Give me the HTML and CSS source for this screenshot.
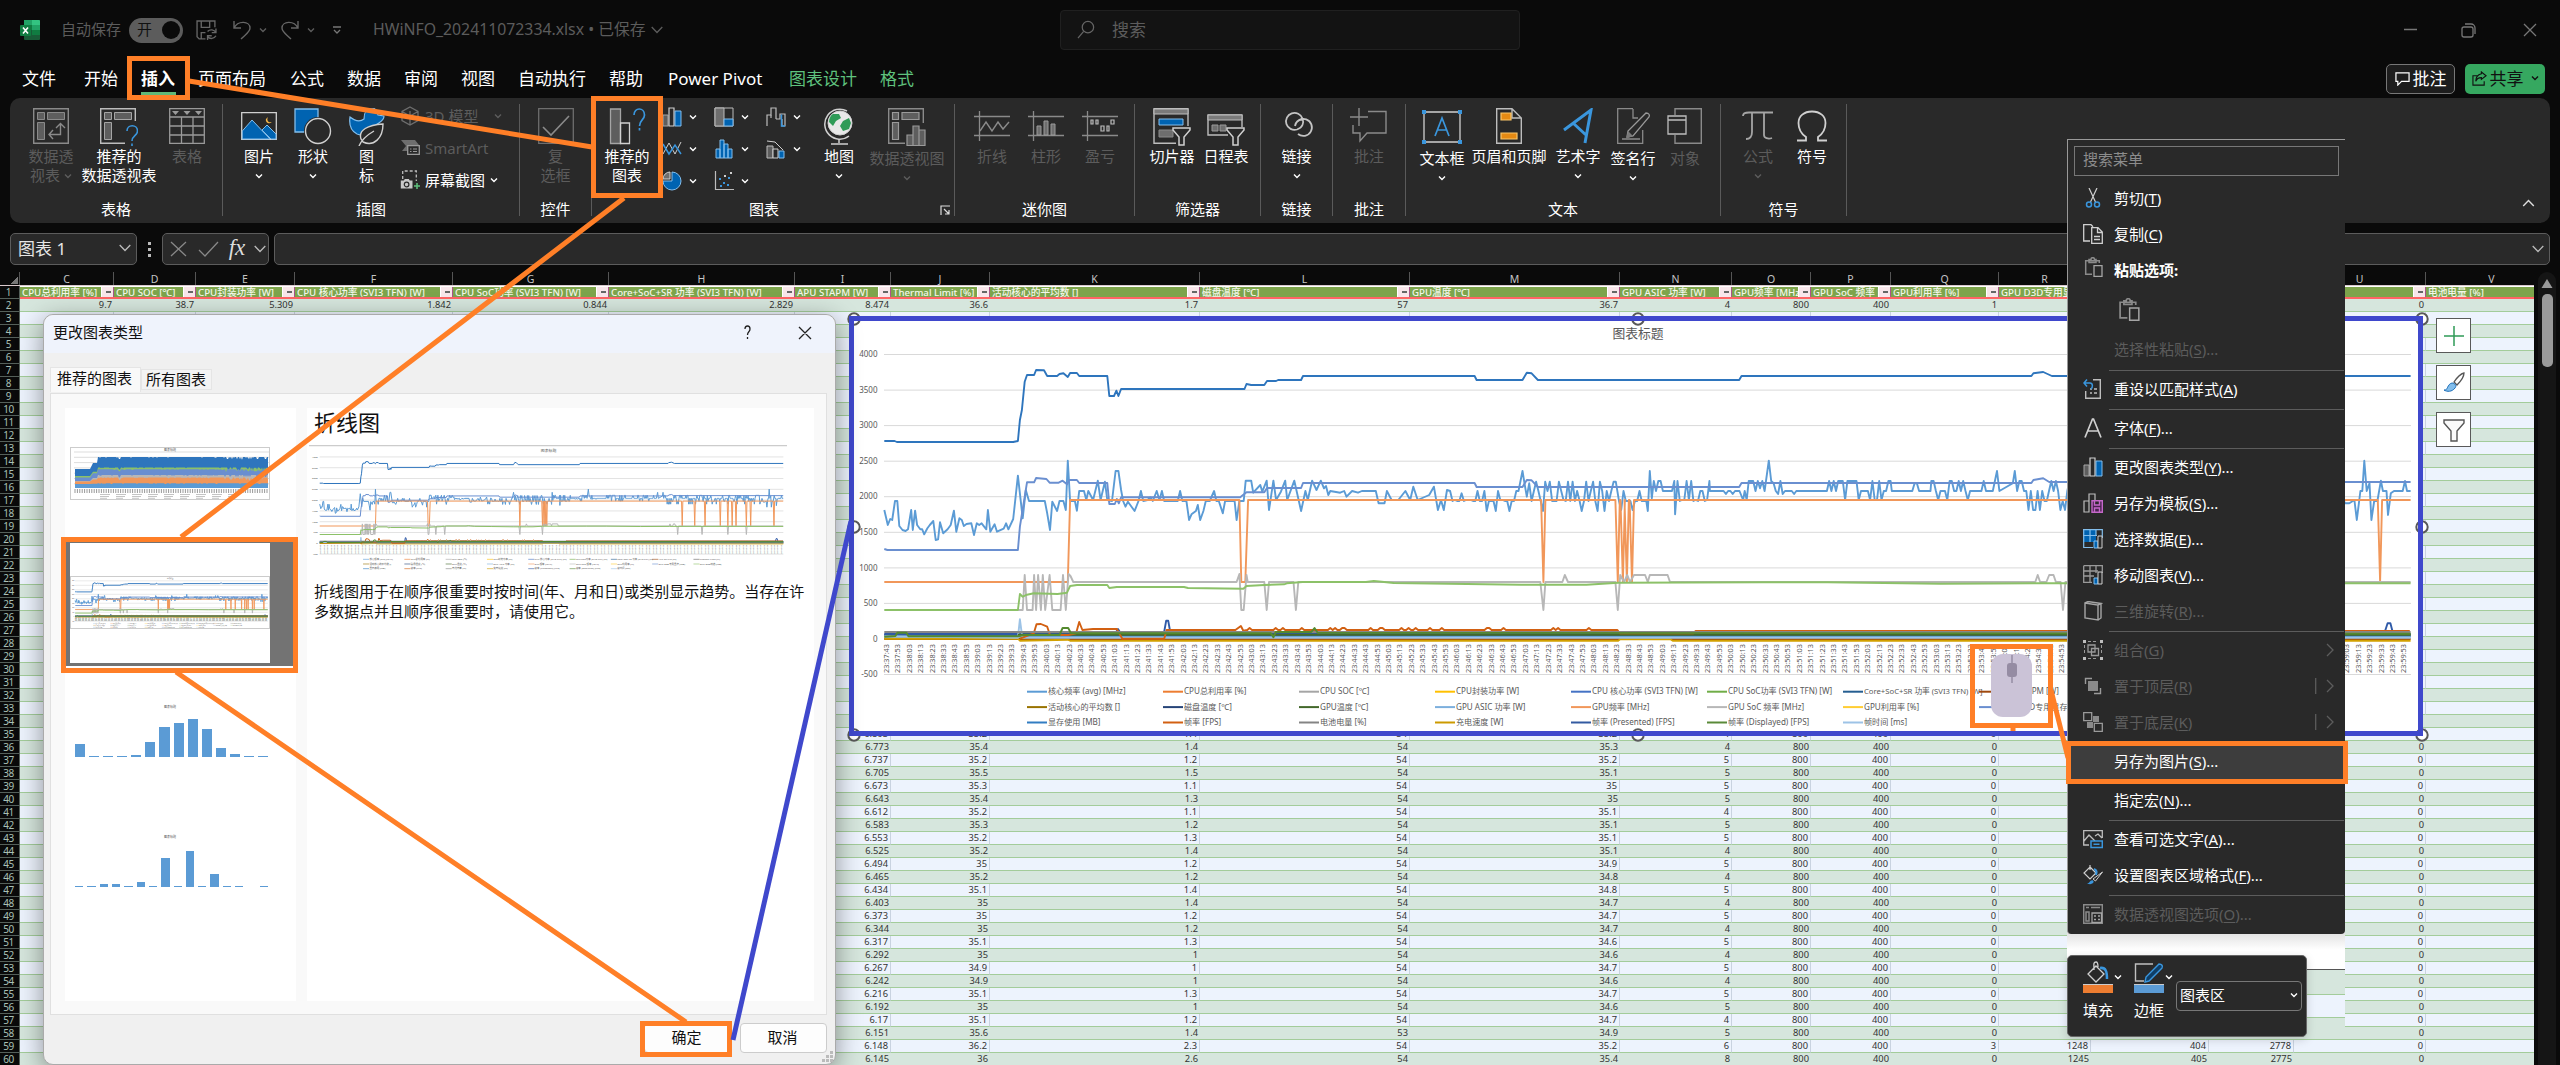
FILE: index.html
```html
<!DOCTYPE html>
<html lang="zh-CN">
<head>
<meta charset="utf-8">
<title>HWiNFO_202411072334.xlsx</title>
<link rel="stylesheet" href="styles.css">
</head>
<body>
<svg class="defs" aria-hidden="true">
  <symbol id="chev" viewBox="0 0 8 8"><path d="M1 2.5 4 5.5 7 2.5" fill="none" stroke="currentColor" stroke-width="1.4"/></symbol>
  <symbol id="chev-lg" viewBox="0 0 12 8"><path d="M.7 1 6 6.5 11.300 1" fill="none" stroke="currentColor" stroke-width="1.3"/></symbol>
  <symbol id="pivot" viewBox="0 0 36 36"><path d="M.7.7h34.600v34.600H.7z" fill="none" stroke="#8a8a8a" stroke-width="1.400"/><path d="M4.500 4.500h7v7h-7zM14.500 4.500h17v7h-17zM4.500 14.500h7v17h-7z" fill="#5e5e5e" stroke="#8a8a8a"/><path d="M20 22l-4 4.500 4 4.500M16 26.500h11.500V16M23 20l4.500-4.500L32 20" fill="none" stroke="#8a8a8a" stroke-width="1.400"/></symbol>
  <symbol id="pivot-q" viewBox="0 0 38 38"><path d="M25 35.300H.7V.7h34.600V13" fill="none" stroke="#bdbdbd" stroke-width="1.400"/><path d="M4.500 4.500h7v7h-7zM14.500 4.500h17v7h-17zM4.500 14.500h7v17h-7z" fill="#5e5e5e" stroke="#a5a5a5"/><path d="M27 23c0-7 10.500-7 10.500 0 0 5-5.500 4.500-5.500 10M32 35.500V38" fill="none" stroke="#3a96dd" stroke-width="1.600"/></symbol>
  <symbol id="table" viewBox="0 0 36 36"><path d="M.7.7h34.600v34.600H.7zM.7 9h34.600M.7 18h34.600M.7 27h34.600M12.500 9v26.500M24 9v26.500" fill="none" stroke="#9a9a9a" stroke-width="1.300"/><path d="M3 3h7L6.500 7zM14.500 3h7L18 7zM26 3h7l-3.500 4z" fill="#9a9a9a"/></symbol>
  <symbol id="picture" viewBox="0 0 36 36"><path d="M.7 4.700h34.600v26.600H.7z" fill="none" stroke="#d0d0d0" stroke-width="1.300"/><path d="M1.300 23 11 12l18 19H1.300zM21 22l5-5 9 9v5h-5z" fill="#0063b1" stroke="#83beec"/><path d="M27 9c-2 4 1 6 4 5-3 3-7 0-6-3z" fill="#f7b94a"/></symbol>
  <symbol id="shapes" viewBox="0 0 38 38"><path d="M1 1h23v23H1z" fill="#0063b1" stroke="#83beec" stroke-width="1.300"/><circle cx="24" cy="23" r="14" fill="#292929"/><circle cx="24" cy="23" r="12.500" fill="#292929" stroke="#d0d0d0" stroke-width="1.400"/></symbol>
  <symbol id="icons" viewBox="0 0 36 38"><path d="M1 9c5 4 10 5 14 2 0-14 13-14 14-4l6 1c0 6-6 6-9 10-5 9-13 10-18 8C2 23 0 16 1 9z" fill="#0063b1" stroke="#83beec" stroke-width="1.200"/><path d="M10 38c3-7 8-11 15-15M12 31C9 22 19 17 34 16c0 14-9 23-20 18z" fill="#292929" stroke="#d0d0d0" stroke-width="1.400"/></symbol>
  <symbol id="cube" viewBox="0 0 20 20"><path d="M10 1l8 4.500v9L10 19l-8-4.500v-9zM2 5.500l8 4.500 8-4.500M10 10v9M10 5v5" fill="none" stroke="#6e6e6e" stroke-width="1.300"/></symbol>
  <symbol id="smartart" viewBox="0 0 20 20"><path d="M1 2h14l4 5H7v6H2l4-5z" fill="#6e6e6e"/><path d="M7.700 7.700h11.600v8.600H7.700z" fill="#292929" stroke="#9a9a9a" stroke-width="1.300"/><path d="M10 11h1.500M13 11h4M10 13.500h1.500M13 13.500h4" stroke="#9a9a9a"/></symbol>
  <symbol id="shot" viewBox="0 0 20 20"><path d="M2.700 9V1h13.600v10" fill="none" stroke="#bdbdbd" stroke-dasharray="3 2" stroke-width="1.300"/><path d="M.8 10.500h3l1-1.500h4l1 1.500h2.700v8H.8z" fill="#c8c8c8"/><circle cx="6.600" cy="14.500" r="2.300" fill="#c8c8c8" stroke="#292929" stroke-width="1.200"/><path d="M17 13v6M14 16h6" stroke="#5fc27e" stroke-width="1.500"/></symbol>
  <symbol id="check" viewBox="0 0 36 36"><path d="M.7.7h34.600v34.600H.7z" fill="none" stroke="#6e6e6e" stroke-width="1.300"/><path d="M5 19l8 8L31 8" fill="none" stroke="#8a8a8a" stroke-width="1.600"/></symbol>
  <symbol id="rec-chart" viewBox="0 0 38 38"><path d="M2.500 1h10v34.500h-10z" fill="#5e5e5e" stroke="#a5a5a5" stroke-width="1.300"/><path d="M12.500 15h9v20.500h-9z" fill="none" stroke="#d0d0d0" stroke-width="1.300"/><path d="M26 7c0-8 10.500-8 10.500 0 0 5-5 5-5 11M31.500 20v2.500" fill="none" stroke="#3a96dd" stroke-width="1.700"/></symbol>
  <symbol id="c-col" viewBox="0 0 20 20"><path d="M1 8h5v11H1z" fill="#5e5e5e" stroke="#a5a5a5"/><path d="M7 1h5v18H7z" fill="none" stroke="#d0d0d0" stroke-width="1.200"/><path d="M13 4h6v15h-6z" fill="#0063b1" stroke="#83beec"/></symbol>
  <symbol id="c-tree" viewBox="0 0 20 20"><path d="M1 1h18v18H1z" fill="none" stroke="#bdbdbd"/><path d="M1 1h9v18H1z" fill="#6e6e6e" stroke="#bdbdbd"/><path d="M10 12h9v7h-9z" fill="#0063b1" stroke="#83beec"/></symbol>
  <symbol id="c-fall" viewBox="0 0 20 20"><path d="M1 19V8h4V1h5v11" fill="none" stroke="#bdbdbd" stroke-width="1.200"/><path d="M5 8v3M10 12h4V7h5v12h-3v-7" fill="none" stroke="#bdbdbd" stroke-width="1.200"/><path d="M15.500 7.500v11.500h3.500" fill="none" stroke="#3a96dd" stroke-width="1.500"/></symbol>
  <symbol id="c-line" viewBox="0 0 20 20"><path d="M1 15 7 4l6 11 6-12" fill="none" stroke="#d0d0d0"/><path d="M1 5l6 10 6-9 6 9" fill="none" stroke="#3a96dd" stroke-width="1.500"/></symbol>
  <symbol id="c-hist" viewBox="0 0 20 20"><path d="M2 10h4v9H2zM6 1h4v18H6zM10 5h4v14h-4zM14 10h4v9h-4z" fill="#0063b1" stroke="#83beec"/></symbol>
  <symbol id="c-combo" viewBox="0 0 20 20"><path d="M1 7h6v12H1z" fill="#5e5e5e" stroke="#bdbdbd"/><path d="M7 10h5v9H7z" fill="#292929" stroke="#d0d0d0"/><path d="M13 12h5v7h-5z" fill="#0063b1" stroke="#83beec"/><path d="M1 2l8 1 8 8" fill="none" stroke="#d0d0d0"/></symbol>
  <symbol id="c-pie" viewBox="0 0 20 20"><path d="M10 1a9 9 0 11-9 9h9z" fill="#0063b1" stroke="#83beec"/><path d="M8 8H1a7 7 0 017-7z" fill="#6e6e6e" stroke="#d0d0d0"/></symbol>
  <symbol id="c-dot" viewBox="0 0 20 20"><path d="M1.500 0v18.500H20" fill="none" stroke="#bdbdbd" stroke-width="1.200"/><path d="M5 7h2v2H5zM9 11h2v2H9zM14 6h2v2h-2zM13 13h2v2h-2zM6 14h2v2H6z" fill="#3a96dd"/><path d="M10 4h2v2h-2zM16 1h2v2h-2z" fill="#d0d0d0"/></symbol>
  <symbol id="globe" viewBox="0 0 36 38"><path d="M26 3A15 15 0 1 0 28 28" fill="none" stroke="#d0d0d0" stroke-width="1.500"/><circle cx="19" cy="15" r="12" fill="#e8e8e8" stroke="#d0d0d0"/><path d="M12 6l6 0 2 4-5 3-3 5-4-4c0-4 2-7 4-8zM22 13l6-3 2 5-2 6-6 2-3-5z" fill="#2f9b57"/><path d="M18 31v4M10 36h17" stroke="#d0d0d0" stroke-width="1.500"/></symbol>
  <symbol id="pivot-chart" viewBox="0 0 38 38"><path d="M17 35.300H.7V.7h34.600V15" fill="none" stroke="#8a8a8a" stroke-width="1.400"/><path d="M4.500 4.500h6v7h-6zM14 4.500h17v7H14zM4.500 14.500h6v17h-6zM19 27h6v10.500h-6zM25 18h6v19.500h-6zM31 22h6v15.500h-6z" fill="#5e5e5e" stroke="#9a9a9a" stroke-width="1.200"/></symbol>
  <symbol id="sp-line" viewBox="0 0 36 36"><path d="M0 8.500h36M0 27.500h36M5.500 3v30" stroke="#8a8a8a" stroke-width="1.300"/><path d="M6 23l6-9 6 9 6-9 5 7 6-7" fill="none" stroke="#8a8a8a" stroke-width="1.400"/></symbol>
  <symbol id="sp-col" viewBox="0 0 36 36"><path d="M0 8.500h36M0 27.500h36M5.500 3v30" stroke="#8a8a8a" stroke-width="1.300"/><path d="M9 18h4v9H9zM16 13h4v14h-4zM23 16h4v11h-4z" fill="#6e6e6e" stroke="#9a9a9a"/></symbol>
  <symbol id="sp-win" viewBox="0 0 36 36"><path d="M0 8.500h36M0 27.500h36M5.500 3v30" stroke="#8a8a8a" stroke-width="1.300"/><path d="M9 12h2v4H9zM14 12h2v4h-2zM19 18h3v5h-3zM25 18h2v5h-2zM29 12h3v4h-3z" fill="none" stroke="#bdbdbd" stroke-width="1.200"/></symbol>
  <symbol id="slicer" viewBox="0 0 40 38"><path d="M24 35.300H2V.7h34V18" fill="none" stroke="#bdbdbd" stroke-width="1.400"/><path d="M2 1h34v5H2z" fill="#7a7a7a" stroke="#bdbdbd"/><path d="M7 11h24v6H7z" fill="#0063b1" stroke="#83beec"/><path d="M7 22h14v7H7z" fill="#6e6e6e" stroke="#8a8a8a"/><path d="M21 20h17v2l-6 7v8h-5v-8l-6-7z" fill="#292929" stroke="#d0d0d0" stroke-width="1.500"/></symbol>
  <symbol id="timeline" viewBox="0 0 40 38"><path d="M22 27H2V7h34v12" fill="none" stroke="#bdbdbd" stroke-width="1.400"/><path d="M2 7h34v5H2z" fill="#7a7a7a" stroke="#bdbdbd"/><path d="M6 17h6v6H6zM14 17h6v6h-6z" fill="#6e6e6e" stroke="#9a9a9a"/><path d="M21 20h17v2l-6 7v8h-5v-8l-6-7z" fill="#292929" stroke="#d0d0d0" stroke-width="1.500"/></symbol>
  <symbol id="link" viewBox="0 0 36 36"><path d="M18 21.500a8.500 8.500 0 1 1 5.500-11M16 18a8.500 8.500 0 1 1 3 8M23.500 10.500c1.500 4 .5 9-5.500 11M16 18c.5-3 3-6 7-6.500" fill="none" stroke="#c4c4c4" stroke-width="1.800"/></symbol>
  <symbol id="comment" viewBox="0 0 38 38"><path d="M18 3.500h18V25H17l-7 8v-8H3V17M9 0v18M0 9h18" fill="none" stroke="#8a8a8a" stroke-width="1.400"/></symbol>
  <symbol id="textbox" viewBox="0 0 40 38"><path d="M2 4h36v30H2z" fill="none" stroke="#d0d0d0" stroke-width="1.300"/><path d="M0 2h4v4H0zM36 2h4v4h-4zM0 32h4v4H0zM36 32h4v4h-4z" fill="#3a96dd"/><path d="M13 28l7-18 7 18M15.500 22h9" fill="none" stroke="#3a96dd" stroke-width="1.700"/></symbol>
  <symbol id="hf" viewBox="0 0 36 36"><path d="M5.700.7H21l9.300 9.300v25.300H5.700zM21 1v9h9" fill="none" stroke="#bdbdbd" stroke-width="1.400"/><path d="M10 5h10v7H10zM10 25h16v6H10z" fill="#e58a13" stroke="#f9c66b" stroke-width="1.200"/></symbol>
  <symbol id="wordart" viewBox="0 0 36 36"><path d="M4 22 31 2l-6 33M13 15l13 12" fill="none" stroke="#3a96dd" stroke-width="3"/></symbol>
  <symbol id="sign" viewBox="0 0 36 36"><path d="M18 .700H2.700v34.600h25V22M18 1v9h5M7 31h18" fill="none" stroke="#8a8a8a" stroke-width="1.300"/><path d="M31 5c3 0 4 2 3 4L18 28l-6 1 1-6z" fill="#292929" stroke="#9a9a9a" stroke-width="1.300"/><path d="M13 23l5 5-7 3z" fill="#7a7a7a"/></symbol>
  <symbol id="object" viewBox="0 0 36 36"><path d="M8 7V.7h26.300v34.600H8V27" fill="none" stroke="#8a8a8a" stroke-width="1.400"/><path d="M1 8h18v18H1zM1 12h18" fill="#292929" stroke="#bdbdbd" stroke-width="1.300"/></symbol>
  <symbol id="pi" viewBox="0 0 36 36"><path d="M3 8c0-3 3-3.500 6-3.500h24M12 5v19c0 4-2 7-6 7M24 5v22c0 3 4 4.500 8 3" fill="none" stroke="#a5a5a5" stroke-width="1.800"/></symbol>
  <symbol id="omega" viewBox="0 0 36 36"><path d="M3 32.500h9V29C6 25 4.500 20 4.500 15 4.500 8 10 3.500 18 3.500S31.500 8 31.500 15c0 5-1.500 10-7.500 14v3.500h9" fill="none" stroke="#d0d0d0" stroke-width="1.800"/></symbol>
  <symbol id="m-cut" viewBox="0 0 20 20"><path d="M6 0l6.500 14M14 0 7.500 14" stroke="#d0d0d0" stroke-width="1.200"/><circle cx="6" cy="16.500" r="2.500" fill="none" stroke="#3a96dd" stroke-width="1.500"/><circle cx="14" cy="16.500" r="2.500" fill="none" stroke="#3a96dd" stroke-width="1.500"/></symbol>
  <symbol id="m-copy" viewBox="0 0 20 20"><path d="M7 17H.7V.7H8l2 2M8.700 3.700H15l4.300 4.300v11.300H8.700zM14.500 4v4.500H19M11 12.500h6M11 15.500h6" fill="none" stroke="#d0d0d0" stroke-width="1.300"/></symbol>
  <symbol id="m-paste" viewBox="0 0 20 20"><path d="M9 17.300H2.700V3.700h13.600V6M6 5.500v-3h2C8 0 11.500 0 11.500 2.500H13v3z" fill="none" stroke="#8a8a8a" stroke-width="1.500"/><path d="M11 8.700h8v10.600h-8z" fill="#292929" stroke="#a5a5a5" stroke-width="1.300"/></symbol>
  <symbol id="m-reset" viewBox="0 0 20 20"><path d="M10 .7h7.300v18.600H2.700V12M7 10h2M11 10h3M7 14h2M11 14h3" fill="none" stroke="#bdbdbd" stroke-width="1.400"/><path d="M4 .5 1 4l3 3.500M1 4h6c3 0 3 4 1 6" fill="none" stroke="#3a96dd" stroke-width="1.500"/></symbol>
  <symbol id="m-font" viewBox="0 0 20 20"><path d="M2 19.500 9.500 1h1L18 19.500M4.500 13h11" fill="none" stroke="#d0d0d0" stroke-width="1.700"/></symbol>
  <symbol id="m-tpl" viewBox="0 0 20 20"><path d="M1 8h5v11H1zM6 19V1h6v6" fill="none" stroke="#bdbdbd" stroke-width="1.200"/><path d="M9 7.700h10.300v11.600H9zM11.500 8v4h5V8M11.500 19v-4h5v4" fill="#4b2250" stroke="#c468c9" stroke-width="1.400"/></symbol>
  <symbol id="m-data" viewBox="0 0 20 20"><path d="M0 0h13v13H0z" fill="#0063b1"/><path d="M0 .7h19.300V9M.7 13v5.500H10M.7 0v13M0 6.500h14M7 0v13M13 0v7" fill="none" stroke="#83beec" stroke-width="1.200"/><path d="M11 12h4v7h-4z" fill="#0063b1" stroke="#83beec"/><path d="M15 7h4v12h-4z" fill="#292929" stroke="#d0d0d0"/></symbol>
  <symbol id="m-move" viewBox="0 0 20 20"><path d="M.7.7h18.600V8M.7.700v16.600H9M0 6h15M0 11h11M7 0v17M13 0v8" fill="none" stroke="#9a9a9a" stroke-width="1.300"/><path d="M11 13h4v6h-4z" fill="#0063b1" stroke="#83beec"/><path d="M15 7h4v12h-4z" fill="#292929" stroke="#d0d0d0"/></symbol>
  <symbol id="m-3d" viewBox="0 0 20 20"><path d="M2 2l13 2v15L2 17zM2 2l3-1.500 13 2-3 1.500M18 2.500V17l-3 2" fill="none" stroke="#a5a5a5" stroke-width="1.400"/></symbol>
  <symbol id="m-group" viewBox="0 0 20 20"><path d="M5 5h7v7H5zM8.500 8.500h7v7h-7z" fill="none" stroke="#9a9a9a" stroke-width="1.300"/><path d="M0 0h3v3H0zM17 0h3v3h-3zM0 17h3v3H0zM17 17h3v3h-3z" fill="#bdbdbd"/><path d="M5 1.500h10M5 18.500h10M1.500 5v10M18.500 5v10" stroke="#9a9a9a" stroke-dasharray="3 2"/></symbol>
  <symbol id="m-front" viewBox="0 0 20 20"><path d="M5 5h10v10H5z" fill="#8a8a8a"/><path d="M2.500 8V2.500H9M17.500 12v5.500H11" fill="none" stroke="#9a9a9a" stroke-width="1.400"/></symbol>
  <symbol id="m-back" viewBox="0 0 20 20"><path d="M10 4h6v6h-6zM4 10h6v6H4z" fill="#8a8a8a"/><path d="M.7.700h8v8h-8zM11.300 11.300h8v8h-8z" fill="#292929" stroke="#9a9a9a" stroke-width="1.300"/></symbol>
  <symbol id="m-alt" viewBox="0 0 20 20"><path d="M6 16H.7V1.700h18.600V9M1 12l5-6 6 6M12 7l3-2 4 4" fill="none" stroke="#bdbdbd" stroke-width="1.300"/><path d="M8 12h11.300v6.500H8zM10.500 15.200h6" fill="#292929" stroke="#3a96dd" stroke-width="1.500"/></symbol>
  <symbol id="m-fmt" viewBox="0 0 20 20"><path d="M7 0v5M7 2l6 6-6 6-6-6z" fill="none" stroke="#d0d0d0" stroke-width="1.200"/><path d="M11 4c3 1 3 3 2 6" stroke="#3a96dd" stroke-width="2" fill="none"/><path d="M19.500 7l-7 9-2.500-2z" fill="#292929" stroke="#d0d0d0"/><path d="M4 18.500c3 0 3-4 6-3 2 2-1 5-6 3z" fill="#3a96dd"/></symbol>
  <symbol id="m-pivot" viewBox="0 0 20 20"><path d="M.7.700h18.600v18.600H.7zM3 3.500h3M8 3.500h9M3 8h3v9H3z" fill="none" stroke="#8a8a8a" stroke-width="1.500"/><path d="M9 9h9.500v9.500H9zM11 12h2M15 12h2M11 15.500h2M15 15.500h2" fill="#292929" stroke="#a5a5a5" stroke-width="1.300"/></symbol>
</svg>

<div class="app">
  <header class="titlebar">
    <svg class="xl" viewBox="0 0 20 20"><path d="M5 0h14a1 1 0 011 1v18a1 1 0 01-1 1H5a1 1 0 01-1-1V1a1 1 0 011-1z" fill="#185c37"/><path d="M4 0h8v5H4z" fill="#21a366"/><path d="M12 0h7a1 1 0 011 1v4h-8z" fill="#33c481"/><path d="M4 5h8v5H4z" fill="#107c41"/><path d="M12 5h8v5h-8z" fill="#21a366"/><path d="M12 10h8v5h-8z" fill="#107c41"/><rect y="5" width="11" height="11" rx="1" fill="#107c41"/><path d="M3 7.500l5 6M8 7.500l-5 6" stroke="#fff" stroke-width="1.600"/></svg>
    <span class="autosave">自动保存</span>
    <span class="toggle">开<i></i></span>
    <svg class="q-save" viewBox="0 0 20 20"><path d="M9 18H3L1 16V1h17v6M5 1v6h8V1M5 18v-6h4M11 11a5 5 0 018 1M19 8v4h-4M19 15a5 5 0 01-8 1M11 19v-4h4" fill="none" stroke="#666" stroke-width="1.300"/></svg>
    <svg class="q-undo" viewBox="0 0 20 20"><path d="M2 1v7h7M2 8c4-8 16-7 16 0 0 4-4 6-9 11" fill="none" stroke="#666" stroke-width="1.400"/></svg>
    <svg class="q-chev"><use href="#chev"/></svg>
    <svg class="q-redo" viewBox="0 0 20 20"><path d="M18 1v7h-7M18 8C14 0 2 1 2 8c0 4 4 6 9 11" fill="none" stroke="#666" stroke-width="1.400"/></svg>
    <svg class="q-chev"><use href="#chev"/></svg>
    <svg class="q-more" viewBox="0 0 10 10"><path d="M1 2h8M2 5l3 3 3-3" fill="none" stroke="#777" stroke-width="1.300"/></svg>
    <span class="doc">HWiNFO_202411072334.xlsx • 已保存</span>
    <svg class="q-big"><use href="#chev-lg"/></svg>
    <div class="search"><svg viewBox="0 0 20 20"><circle cx="11.500" cy="7.500" r="6" fill="none" stroke="#666" stroke-width="1.300"/><path d="M7 12l-6 7" stroke="#666" stroke-width="1.300"/></svg>搜索</div>
    <svg class="win" viewBox="0 0 140 20"><path d="M4 9.500h13M64 7h7a2 2 0 012 2v6a2 2 0 01-2 2h-7a2 2 0 01-2-2V9a2 2 0 012-2zM65 4h6a4 4 0 014 4v6M124 4l12 12M136 4l-12 12" fill="none" stroke="#777" stroke-width="1.300"/></svg>
  </header>

  <nav class="tabs">
    <span class="t-file">文件</span><span class="t-home">开始</span><span class="t-insert active">插入</span><span class="t-layout">页面布局</span><span>公式</span><span>数据</span><span>审阅</span><span>视图</span><span class="t-auto">自动执行</span><span>帮助</span><span class="t-pp">Power Pivot</span><span class="t-design">图表设计</span><span class="t-format">格式</span>
    <button class="b-comment"><svg viewBox="0 0 16 16"><path d="M1 2h14v9H7l-4 4v-4H1z" fill="none" stroke="#fff" stroke-width="1.300"/></svg>批注</button>
    <button class="b-share"><svg viewBox="0 0 16 16"><path d="M6 5H1v10h12v-4M10 1l5 4-5 4V7c-3 0-5 1-6 4 0-4 2-7 6-8z" fill="none" stroke="#111" stroke-width="1.200"/></svg>共享<svg class="ch"><use href="#chev"/></svg></button>
  </nav>

  <section class="ribbon">
    <div class="group g-table"><div class="items">
      <div class="item off"><svg><use href="#pivot"/></svg><b>数据透</b><b>视表<svg class="ch"><use href="#chev"/></svg></b></div>
      <div class="item"><svg class="w38"><use href="#pivot-q"/></svg><b>推荐的</b><b>数据透视表</b></div>
      <div class="item off"><svg><use href="#table"/></svg><b>表格</b></div>
    </div><h6>表格</h6></div>
    <div class="group g-illus"><div class="items">
      <div class="item"><svg><use href="#picture"/></svg><b>图片</b><svg class="ch"><use href="#chev"/></svg></div>
      <div class="item"><svg class="w38"><use href="#shapes"/></svg><b>形状</b><svg class="ch"><use href="#chev"/></svg></div>
      <div class="item"><svg class="w38"><use href="#icons"/></svg><b>图</b><b>标</b></div>
      <div class="stack">
        <div class="off"><svg><use href="#cube"/></svg>3D 模型<svg class="ch far"><use href="#chev"/></svg></div>
        <div class="off"><svg><use href="#smartart"/></svg>SmartArt</div>
        <div><svg><use href="#shot"/></svg>屏幕截图<svg class="ch"><use href="#chev"/></svg></div>
      </div>
    </div><h6>插图</h6></div>
    <div class="group g-ctrl"><div class="items"><div class="item off"><svg><use href="#check"/></svg><b>复</b><b>选框</b></div></div><h6>控件</h6></div>
    <div class="group g-chart"><div class="items">
      <div class="item"><svg class="w38"><use href="#rec-chart"/></svg><b>推荐的</b><b>图表</b></div>
      <div class="minis">
        <span><svg><use href="#c-col"/></svg><svg class="ch"><use href="#chev"/></svg></span><span><svg><use href="#c-tree"/></svg><svg class="ch"><use href="#chev"/></svg></span><span><svg><use href="#c-fall"/></svg><svg class="ch"><use href="#chev"/></svg></span>
        <span><svg><use href="#c-line"/></svg><svg class="ch"><use href="#chev"/></svg></span><span><svg><use href="#c-hist"/></svg><svg class="ch"><use href="#chev"/></svg></span><span><svg><use href="#c-combo"/></svg><svg class="ch"><use href="#chev"/></svg></span>
        <span><svg><use href="#c-pie"/></svg><svg class="ch"><use href="#chev"/></svg></span><span><svg><use href="#c-dot"/></svg><svg class="ch"><use href="#chev"/></svg></span>
      </div>
      <div class="item"><svg class="w38"><use href="#globe"/></svg><b>地图</b><svg class="ch"><use href="#chev"/></svg></div>
      <div class="item off low"><svg class="w38"><use href="#pivot-chart"/></svg><b>数据透视图</b><svg class="ch"><use href="#chev"/></svg></div>
    </div><h6 class="h-chart">图表<svg class="launch" viewBox="0 0 10 10"><path d="M1 10V1h9M4 4l5 5M9 5v4H5" fill="none" stroke="#ddd" stroke-width="1.200"/></svg></h6></div>
    <div class="group g-spark"><div class="items">
      <div class="item off"><svg><use href="#sp-line"/></svg><b>折线</b></div><div class="item off"><svg><use href="#sp-col"/></svg><b>柱形</b></div><div class="item off"><svg><use href="#sp-win"/></svg><b>盈亏</b></div>
    </div><h6>迷你图</h6></div>
    <div class="group g-filter"><div class="items">
      <div class="item"><svg class="w40"><use href="#slicer"/></svg><b>切片器</b></div><div class="item"><svg class="w40"><use href="#timeline"/></svg><b>日程表</b></div>
    </div><h6>筛选器</h6></div>
    <div class="group g-link"><div class="items"><div class="item"><svg><use href="#link"/></svg><b>链接</b><svg class="ch"><use href="#chev"/></svg></div></div><h6>链接</h6></div>
    <div class="group g-note"><div class="items"><div class="item off"><svg class="w38"><use href="#comment"/></svg><b>批注</b></div></div><h6>批注</h6></div>
    <div class="group g-text"><div class="items">
      <div class="item low"><svg class="w40"><use href="#textbox"/></svg><b>文本框</b><svg class="ch"><use href="#chev"/></svg></div>
      <div class="item"><svg><use href="#hf"/></svg><b>页眉和页脚</b></div>
      <div class="item"><svg><use href="#wordart"/></svg><b>艺术字</b><svg class="ch"><use href="#chev"/></svg></div>
      <div class="item low s36"><svg><use href="#sign"/></svg><b>签名行</b><svg class="ch"><use href="#chev"/></svg></div>
      <div class="item off low s36"><svg><use href="#object"/></svg><b>对象</b></div>
    </div><h6>文本</h6></div>
    <div class="group g-sym"><div class="items">
      <div class="item off"><svg><use href="#pi"/></svg><b>公式</b><svg class="ch"><use href="#chev"/></svg></div><div class="item"><svg><use href="#omega"/></svg><b>符号</b></div>
    </div><h6>符号</h6></div>
    <svg class="collapse" viewBox="0 0 12 8"><path d="M.7 7 6 1.500 11.300 7" fill="none" stroke="#ddd" stroke-width="1.400"/></svg>
  </section>

  <div class="fbar">
    <div class="namebox">图表 1<svg><use href="#chev-lg"/></svg></div>
    <div class="dots"><i></i><i></i><i></i></div>
    <div class="fx"><svg class="fx-marks" viewBox="0 0 50 20"><path d="M1 3l15 14M16 3 1 17M29 11l6 6L48 3" fill="none" stroke="#888" stroke-width="1.300"/></svg><em>fx</em><svg><use href="#chev-lg"/></svg></div>
    <div class="finput"><svg><use href="#chev-lg"/></svg></div>
  </div>

  <main class="sheet-area">
    <div class="sheet" id="sheet"></div>
    <div class="vscroll"><svg viewBox="0 0 12 9"><path d="M6 0l5.500 9H.5z" fill="#9a9a9a"/></svg><i></i></div>
  </main>
</div>

<div class="chart" id="chart"></div>
<div class="side">
  <span><svg viewBox="0 0 24 24"><path d="M12 2v20M2 12h20" stroke="#2f9b57" stroke-width="1.500"/></svg></span>
  <span><svg viewBox="0 0 24 24"><path d="M22 2c-4 1-8 6-10 9l3 3c3-3 7-8 7-12z" fill="#fff" stroke="#555" stroke-width="1.300"/><path d="M2 19c4 1 3-6 8-7 3 0 5 3 3 5-3 4-8 4-11 2z" fill="#83beec" stroke="#1e6fb8"/></svg></span>
  <span><svg viewBox="0 0 24 24"><path d="M2 2h20v3l-7 8v10H9V13L2 5z" fill="#fafafa" stroke="#555" stroke-width="1.400"/></svg></span>
</div>

<section class="dialog">
  <header>更改图表类型<svg viewBox="0 0 70 20"><path d="M9 6c0-4 5-4 5 0 0 3-2.500 2.500-2.500 6M11.500 14v2M63 4l12 12M75 4 63 16" fill="none" stroke="#222" stroke-width="1.300"/></svg></header>
  <div class="dtabs"><span class="on">推荐的图表</span><span>所有图表</span></div>
  <div class="panel">
    <div class="thumbs">
      <div class="thumb"><svg id="area" class="mini" viewBox="0 0 200 53"></svg></div>
      <div class="thumb sel"><div id="thumb-line" class="mini"></div></div>
      <div class="thumb"><div class="hist" id="hist-a"></div></div>
      <div class="thumb"><div class="hist" id="hist-b"></div></div>
    </div>
    <div class="detail">
      <h2>折线图</h2>
      <div id="preview"></div>
      <p>折线图用于在顺序很重要时按时间(年、月和日)或类别显示趋势。当存在许多数据点并且顺序很重要时，请使用它。</p>
    </div>
  </div>
  <footer><button>确定</button><button>取消</button></footer>
  <svg class="grip" viewBox="0 0 12 12"><path d="M8 0h3v3H8zM8 4h3v3H8zM4 4h3v3H4zM8 8h3v3H8zM4 8h3v3H4zM0 8h3v3H0z" fill="#bbb"/></svg>
</section>

<div class="ctx-back"></div>
<aside class="ctx">
  <div class="ctx-search">搜索菜单</div>
  <div class="mi"><svg><use href="#m-cut"/></svg>剪切(<u>T</u>)</div>
  <div class="mi"><svg><use href="#m-copy"/></svg>复制(<u>C</u>)</div>
  <div class="mi head"><svg><use href="#m-paste"/></svg>粘贴选项:</div>
  <div class="mi opt"><svg><use href="#m-paste"/></svg></div>
  <div class="mi off special">选择性粘贴(<u>S</u>)...</div>
  <hr>
  <div class="mi"><svg><use href="#m-reset"/></svg>重设以匹配样式(<u>A</u>)</div>
  <hr>
  <div class="mi"><svg><use href="#m-font"/></svg>字体(<u>F</u>)...</div>
  <hr>
  <div class="mi"><svg><use href="#c-col"/></svg>更改图表类型(<u>Y</u>)...</div>
  <div class="mi"><svg><use href="#m-tpl"/></svg>另存为模板(<u>S</u>)...</div>
  <div class="mi"><svg><use href="#m-data"/></svg>选择数据(<u>E</u>)...</div>
  <div class="mi"><svg><use href="#m-move"/></svg>移动图表(<u>V</u>)...</div>
  <div class="mi off"><svg><use href="#m-3d"/></svg>三维旋转(<u>R</u>)...</div>
  <hr>
  <div class="mi off"><svg><use href="#m-group"/></svg>组合(<u>G</u>)<svg class="sub" viewBox="0 0 20 20"><path d="M12 4l6 6-6 6" fill="none" stroke="currentColor" stroke-width="1.300"/></svg></div>
  <div class="mi off"><svg><use href="#m-front"/></svg>置于顶层(<u>R</u>)<svg class="sub" viewBox="0 0 20 20"><path d="M.7 2v16M12 4l6 6-6 6" fill="none" stroke="currentColor" stroke-width="1.300"/></svg></div>
  <div class="mi off"><svg><use href="#m-back"/></svg>置于底层(<u>K</u>)<svg class="sub" viewBox="0 0 20 20"><path d="M.7 2v16M12 4l6 6-6 6" fill="none" stroke="currentColor" stroke-width="1.300"/></svg></div>
  <hr>
  <div class="mi hot">另存为图片(<u>S</u>)...</div>
  <hr>
  <div class="mi">指定宏(<u>N</u>)...</div>
  <hr>
  <div class="mi"><svg><use href="#m-alt"/></svg>查看可选文字(<u>A</u>)...</div>
  <div class="mi"><svg><use href="#m-fmt"/></svg>设置图表区域格式(<u>F</u>)...</div>
  <hr>
  <div class="mi off"><svg><use href="#m-pivot"/></svg>数据透视图选项(<u>O</u>)...</div>
</aside>

<div class="minibar">
  <div class="tool"><span><svg viewBox="0 0 30 32"><path d="M13 1c-3 0-2 3-2 8M13 1c2 0 2 3 2 5M13 5l8 8-8 8-8-8z" fill="none" stroke="#d0d0d0" stroke-width="1.300"/><path d="M17 7c6-1 7 4 7 11" fill="none" stroke="#3a96dd" stroke-width="2.500"/><path d="M0 24h30v8H0z" fill="#ed7d31"/><path d="M0 23.500h30" stroke="#ccc"/></svg><svg class="ch"><use href="#chev"/></svg></span>填充</div>
  <div class="tool"><span><svg viewBox="0 0 30 32"><path d="M10 20H1.500V3H19" fill="none" stroke="#c0c0c0" stroke-width="1.400"/><path d="M25 3c3 0 4 2 3 4L15 20l-4 1 1-5z" fill="#0f3e66" stroke="#3a96dd" stroke-width="1.400"/><path d="M0 24h30v8H0z" fill="#5b9bd5"/><path d="M0 23.500h30" stroke="#ccc"/></svg><svg class="ch"><use href="#chev"/></svg></span>边框</div>
  <div class="combo">图表区<svg class="ch"><use href="#chev"/></svg></div>
</div>

<svg class="marks" viewBox="0 0 2560 1065">
  <g fill="none" stroke="#ff7f27" stroke-width="5">
    <path d="M129.500 58.500h58v39h-58zM593.500 98.500h67v97h-67zM642.500 1023.500h87v31h-87zM1972.500 646.500h78v79h-78zM2068.500 743.500h277v38h-277z"/>
    <path d="M63.500 539.500h232v131h-232z"/>
    <path d="M189 81l403 66M624 198 181 537M176 672l510 350M2051 690l17 68M2013 728v3"/>
  </g>
  <path d="M733 1040 851 521" stroke="#3f48cc" stroke-width="5"/>
  <rect x="1991" y="654" width="41" height="63" rx="12" fill="#cbc3d7"/>
  <path d="M2012 655v28" stroke="#958ca3" stroke-width="1.500"/><rect x="2007" y="663" width="10" height="14" rx="3" fill="#958ca3"/>
</svg>
<script src="script.js"></script>
</body>
</html>
```
FILE: styles.css
```css
* { box-sizing: border-box; }
body {
  margin: 0; width: 2560px; height: 1065px; overflow: hidden; position: relative;
  background: #0a0a0a; color: #fff;
  font: 15px/19px "Noto Sans", "Noto Sans CJK SC", sans-serif;
}
.defs { position: absolute; width: 0; height: 0; }
svg { display: block; flex: none; }
button { font: inherit; margin: 0; padding: 0; }
.ch { width: 8px; height: 8px; }
.app { display: flex; flex-direction: column; height: 1065px; }

/* title bar */
.titlebar { display: flex; align-items: center; height: 60px; padding-left: 20px; color: #5c5c5c; }
.xl { width: 20px; height: 20px; }
.autosave { margin-left: 21px; width: 68px; padding-bottom: 1px; }
.toggle { display: flex; align-items: center; justify-content: space-between; width: 54px; height: 25px; border-radius: 13px; background: #5c5c5c; color: #111; padding: 0 3px 1px 8px; }
.toggle i { width: 18px; height: 18px; border-radius: 50%; background: #0a0a0a; margin-top: 1px; }
.q-save { width: 21px; height: 21px; margin-left: 13px; }
.q-undo { width: 20px; height: 20px; margin-left: 15px; }
.q-redo { width: 20px; height: 20px; margin-left: 13px; }
.q-chev { width: 8px; height: 8px; margin-left: 7px; }
.q-more { width: 10px; height: 10px; margin-left: 17px; }
.doc { margin-left: 31px; width: 272px; font-size: 15.800px; white-space: nowrap; padding-bottom: 1px; }
.q-big { width: 12px; height: 8px; margin-left: 6px; }
.search { display: flex; align-items: center; gap: 16px; width: 460px; height: 40px; margin-left: 397px; padding: 0 0 2px 16px; background: #131313; border: 1px solid #202020; border-radius: 4px; font-size: 17px; }
.search svg { width: 19px; height: 19px; }
.win { width: 140px; height: 20px; margin-left: 880px; }

/* tabs */
.tabs { display: flex; align-items: center; height: 38px; padding-left: 22px; font-size: 17px; white-space: nowrap; }
.tabs span { width: 57px; line-height: 35px; height: 36px; }
.tabs .t-file { width: 62px; }
.tabs .t-layout { width: 92px; }
.tabs .t-auto { width: 91px; }
.tabs .t-pp { width: 121px; margin-left: 2px; font-size: 17px; }
.tabs .t-design { width: 91px; color: #5fc27e; }
.tabs .t-format { color: #5fc27e; }
.tabs .active { font-weight: 700; background: linear-gradient(#5fb878, #5fb878) 0 31px / 35px 3px no-repeat; }
.tabs button { display: flex; align-items: center; justify-content: center; height: 30px; border-radius: 5px; font-size: 17px; padding-bottom: 2px; }
.tabs button svg { width: 15px; height: 15px; margin-right: 3px; }
.tabs .b-comment { width: 69px; margin-left: 1449px; background: #1d1d1d; border: 1px solid #777; color: #fff; }
.tabs .b-share { width: 80px; margin-left: 10px; background: #36a860; border: 0; color: #111; }
.tabs .b-share .ch { width: 8px; height: 8px; margin: 0 0 0 7px; }

/* ribbon */
.ribbon { display: flex; flex: none; height: 125px; margin: 0 10px; padding: 6px 0 7px; background: #292929; border-radius: 10px; position: relative; }
.group { display: flex; flex-direction: column; border-right: 1px solid #5a5a5a; height: 112px; }
.group h6 { margin: auto 0 1px; font: inherit; line-height: 12px; text-align: center; position: relative; }
.group .h-chart { padding-right: 18px; }
.items { display: grid; padding-top: 4px; height: 96px; }
.item { display: flex; flex-direction: column; align-items: center; white-space: nowrap; min-width: 0; }
.item > svg { width: 36px; height: 36px; margin-bottom: 3px; }
.item > svg.w38 { width: 38px; height: 38px; margin-bottom: 1px; }
.item > svg.w40 { width: 40px; height: 38px; margin-bottom: 1px; }
.item.low > svg:first-child { margin-bottom: 3px; }
.item.s36 > svg:first-child { margin-bottom: 5px; }
.item b { font-weight: 400; display: flex; align-items: center; line-height: 19px; }
.item b .ch { margin-left: 4px; }
.item > .ch { width: 8px; height: 8px; margin: 6px 0 0; }
.off { color: #5c5c5c; }
.g-table { width: 213px; } .g-table .items { grid-template-columns: 68px 68px 68px; padding-left: 7px; }
.g-illus { width: 297px; } .g-illus .items { grid-template-columns: 54px 54px 53px 119px; padding-left: 9px; }
.g-ctrl { width: 72px; }
.g-chart { width: 363px; } .g-chart .items { grid-template-columns: 70px 156px 42px 94px; }
.g-spark { width: 180px; } .g-spark .items { grid-template-columns: repeat(3, 54px); padding-left: 10px; }
.g-filter { width: 126px; } .g-filter .items { grid-template-columns: 54px 54px; padding-left: 10px; }
.g-link { width: 72px; }
.g-note { width: 73px; }
.g-text { width: 315px; } .g-text .items { grid-template-columns: 60px 74px 64px 46px 58px; padding-left: 6px; }
.g-sym { width: 126px; } .g-sym .items { grid-template-columns: 54px 54px; padding-left: 10px; }
.g-table .items, .g-ctrl .items { justify-content: start; }
.g-ctrl .items, .g-link .items, .g-note .items { grid-template-columns: 100%; }
.stack { display: flex; flex-direction: column; padding-left: 7px; margin-top: -8px; }
.stack > div { display: flex; align-items: center; height: 32px; gap: 5px; white-space: nowrap; font-size: 15px; }
.stack svg { width: 20px; height: 20px; }
.stack .ch { width: 8px; height: 8px; }
.stack .far { margin-left: 11px; }
.minis { display: grid; grid-template: repeat(3, 32px) / repeat(3, 52px); margin-top: -7px; }
.minis span { display: flex; align-items: center; gap: 7px; }
.minis svg { width: 20px; height: 20px; }
.minis .ch { width: 8px; height: 8px; }
.launch { position: absolute; right: 4px; top: 2px; width: 10px; height: 10px; }
.collapse { width: 13px; height: 8px; margin: auto 15px 9px auto; }

/* formula bar */
.fbar { display: flex; flex: none; height: 49px; padding: 10px 10px 7px; }
.fbar > div { height: 32px; display: flex; align-items: center; }
.namebox, .fx, .finput { background: #292929; border: 1px solid #5c5c5c; border-radius: 5px; }
.fbar svg { width: 12px; height: 8px; color: #bbb; }
.namebox { width: 127px; padding: 0 5px 2px 7px; font-size: 17px; justify-content: space-between; color: #e6e6e6; }
.fbar .dots { width: 25px; flex-direction: column; justify-content: center; gap: 3px; }
.dots i { width: 3px; height: 3px; background: #bbb; }
.fx { width: 107px; padding: 0 2px 0 7px; justify-content: space-between; }
.fbar .fx-marks { width: 50px; height: 20px; }
.fx em { font: italic 23px/24px "Liberation Serif", serif; color: #ddd; padding-bottom: 3px; }
.finput { flex: 1; margin-left: 5px; padding-right: 5px; justify-content: flex-end; }

/* worksheet */
.sheet-area { display: flex; flex: none; height: 793px; overflow: hidden; }
.sheet { width: 2534px; overflow: hidden; }
.sheet-area .vscroll { display: flex; flex-direction: column; align-items: center; width: 18px; margin-left: 4px; padding-top: 7px; background: #151515; border-radius: 9px 9px 0 0; }
.vscroll svg { width: 12px; height: 9px; }
.vscroll i { width: 11px; height: 73px; margin-top: 6px; border-radius: 5px; background: #9a9a9a; }
.row { display: grid; height: 13px; width: 2558px; }
.row > span { font-size: 9.300px; line-height: 12px; height: 13px; overflow: hidden; white-space: nowrap; color: #333; text-align: right; padding-right: 2px; }
.row > .n { background: #0a0a0a; color: #a9c0b6; text-align: center; padding: 0 2px 0 0; border-bottom: 1px solid #55605a; border-right: 1px solid #55605a; font-size: 10px; letter-spacing: -.4px; }
.row.even > .c { background: #d6e6dd; border-bottom: 1px solid #a3cc9a; }
.row.odd > .c { background: #edf3fd; border-bottom: 1px solid #a3cc9a; border-right: 1px solid #c9d3e0; }
.row.heads { height: 14px; border-bottom: 1px solid #d8c8cc; }
.row.heads > span { color: #c4c4c4; font-size: 10.500px; line-height: 14px; text-align: center; padding: 0; border-right: 1px solid #555; background: #0a0a0a; height: 13px; }
.row.heads > .corner { background: linear-gradient(135deg, transparent 50%, #777 50%) 11px 5px / 7px 7px no-repeat #0a0a0a; }
.row.first > .h { display: flex; background: #fff; padding: 1px 0 0; height: 13px; border-bottom: 2px solid #ff6464; }
.h b { flex: 1; min-width: 0; overflow: hidden; background: #7da44b; color: #f4f7ec; font-size: 9.700px; font-weight: 500; line-height: 11px; text-align: left; padding-left: 2px; }
.h i { width: 12px; margin: 0 0 0 1px; background: linear-gradient(#666, #666) 4px 4px / 5px 2px no-repeat #f8e6ea; border-right: 1px solid #a58; }

/* embedded chart */
.chart { position: absolute; left: 840px; top: 306px; width: 1594px; height: 440px; }
.chart svg { width: 1594px; height: 440px; }
.side { position: absolute; left: 2436px; top: 318px; display: flex; flex-direction: column; gap: 12px; }
.side span { display: flex; align-items: center; justify-content: center; width: 35px; height: 35px; background: #fff; border: 1px solid #595959; }
.side svg { width: 24px; height: 24px; }
svg .grid { stroke: #d9d9d9; }
svg .s { fill: none; stroke-width: 1.900; stroke-linejoin: round; vector-effect: non-scaling-stroke; }
svg .txt { fill: #595959; font-family: "Noto Sans", "Noto Sans CJK SC", sans-serif; }
#preview svg .s { stroke-width: 1; }
#preview svg .grid { stroke-width: 3; stroke: #e0e0e0; }
#thumb-line svg .s { stroke-width: .9; }
#thumb-line svg .grid { stroke-width: 5; stroke: #ddd; }

/* dialog */
.dialog { position: absolute; left: 43px; top: 314px; width: 793px; height: 751px; border: 1px solid #aaa; border-radius: 10px; background: #f0f0f0; color: #111; box-shadow: 0 6px 26px rgba(0, 0, 0, .4); display: flex; flex-direction: column; overflow: visible; }
.dialog header { display: flex; align-items: center; justify-content: space-between; height: 38px; padding: 0 38px 3px 9px; background: #eff3fc; border-radius: 10px 10px 0 0; }
.dialog header svg { width: 70px; height: 20px; overflow: visible; margin-right: -9px; }
.dtabs { display: flex; align-items: center; height: 24px; margin: 14px 0 3px 6px; }
.dtabs span { width: 71px; height: 21px; line-height: 18px; border: 1px solid #e5e5e5; background: #f3f3f3; padding-left: 4px; white-space: nowrap; }
.dtabs .on { width: 91px; height: 25px; line-height: 20px; padding-left: 6px; background: #f9f9f9; border-bottom: 0; }
.panel { display: flex; gap: 11px; height: 622px; margin: 0 8px 0 6px; padding: 14px 12px 13px 14px; background: #f9f9f9; border: 1px solid #e0e0e0; margin-top: -1px; }
.panel > div { background: #fff; }
.thumbs { flex: none; width: 231px; }
.thumb { height: 130px; padding: 0 5px; display: flex; align-items: center; }
.thumb.sel { background: linear-gradient(#fff, #fff) 5px 5px / 200px 120px no-repeat #737373; height: 128px; }
.mini { flex: none; width: 200px; height: 53px; }
.mini svg { width: 200px; height: 53px; }
.sel .mini { outline: 1px solid #ccc; outline-offset: -1px; overflow: hidden; }
.hist { flex: none; display: flex; align-items: flex-end; gap: 4px; width: 200px; height: 53px; padding: 0 2px 1px 5px; position: relative; }
.hist i { flex: 1; background: #5b9bd5; }
.hist::before { content: "图表标题"; position: absolute; left: 0; right: 0; top: 0; font-size: 3px; line-height: 4px; text-align: center; color: #555; }
.detail { flex: 1; padding: 1px 7px; overflow: hidden; }
.detail h2 { margin: 0; font: inherit; font-size: 22px; line-height: 26px; }
#preview { width: 478px; height: 128px; margin: 10px 0 0 -5px; }
#preview svg { width: 478px; height: 128px; }
.detail p { margin: 8px 0 0; line-height: 20px; width: 494px; font-family: "Noto Sans CJK SC", sans-serif; }
.dialog footer { display: flex; justify-content: flex-end; gap: 9px; padding: 8px 8px 0; }
.dialog footer button { width: 87px; height: 30px; background: #fdfdfd; border: 1px solid #ccc; border-radius: 4px; color: #111; padding: 0 2px 2px 0; }
.grip { position: absolute; right: 1px; bottom: 1px; width: 12px; height: 12px; }

/* context menu */
.ctx-back { position: absolute; left: 2067px; top: 930px; width: 278px; height: 107px; background: linear-gradient(#ddd, #fff 20px, #fff 39px, #555 39px, #555 40px, #d6e6dd 40px, #d6e6dd 64px, #a3cc9a 64px, #a3cc9a 65px, #edf3fd 65px, #edf3fd 87px, #a3cc9a 87px, #a3cc9a 88px, #d6e6dd 88px); }
.ctx { position: absolute; left: 2067px; top: 139px; width: 278px; height: 795px; background: #292929; border: 1px solid #999; border-width: 1px 0 0 1px; border-radius: 0 0 4px 4px; padding-top: 6px; display: flex; flex-direction: column; }
.ctx-search { flex: none; width: 265px; height: 30px; margin: 0 0 5px 6px; border: 1px solid #777; padding-left: 8px; line-height: 25px; color: #8c8c8c; }
.mi { display: flex; flex: none; align-items: center; height: 36px; padding: 0 0 3px 46px; position: relative; white-space: pre; line-height: 20px; }
.mi > svg { width: 20px; height: 20px; margin: 0 11px 0 -31px; }
.mi > .sub { margin: 0 10px 0 auto; }
.mi u { text-underline-offset: 2px; }
.mi.head { height: 37px; font-weight: 700; }
.mi.head > svg { margin-top: -7px; }
.mi.opt { height: 42px; }
.mi.opt > svg { width: 23px; height: 23px; margin: 0 0 0 3px; }
.mi.special { height: 37px; }
.ctx .off { color: #5c5c5c; }
.mi.hot { background: #3d3d3d; }
.ctx hr { flex: none; width: 235px; height: 1px; margin: 1px 1px 1px auto; border: 0; background: #5c5c5c; }

/* floating format bar */
.minibar { position: absolute; left: 2067px; top: 955px; width: 240px; height: 82px; background: #292929; border: 1px solid #666; border-radius: 5px; display: flex; padding: 5px 0 0 15px; box-shadow: 0 3px 10px rgba(0, 0, 0, .15); }
.tool { width: 51px; display: flex; flex-direction: column; gap: 8px; }
.tool span { display: flex; align-items: center; gap: 1px; }
.tool span svg:first-child { width: 30px; height: 32px; }
.combo { display: flex; align-items: center; justify-content: space-between; width: 126px; height: 30px; margin: 20px 0 0 -9px; padding: 0 3px 2px; border: 1px solid #777; border-radius: 4px; }

.marks { position: absolute; left: 0; top: 0; width: 2560px; height: 1065px; }
```
FILE: script.js
```js
/* ---- worksheet ---- */
const edges = [20, 114, 196, 295, 453, 609, 795, 891, 990, 1200, 1410, 1620, 1732, 1811, 1891, 1999, 2091, 2209, 2294, 2426, 2558];
const letters = 'CDEFGHIJKLMNOPQRSTUV'.split('');
const titles = ['CPU总利用率 [%]', 'CPU SOC [℃]', 'CPU封装功率 [W]', 'CPU 核心功率 (SVI3 TFN) [W]', 'CPU SoC功率 (SVI3 TFN) [W]', 'Core+SoC+SR 功率 (SVI3 TFN) [W]', 'APU STAPM [W]', 'Thermal Limit [%]', '活动核心的平均数 []', '磁盘温度 [℃]', 'GPU温度 [℃]', 'GPU ASIC 功率 [W]', 'GPU频率 [MHz]', 'GPU SoC 频率 [MHz]', 'GPU利用率 [%]', 'GPU D3D专用显存 [MB]', '', '', '', '电池电量 [%]'];
const cols = '20px ' + edges.slice(1).map((e, i) => (e - edges[i]) + 'px').join(' ');
const data = {
  2: ['9.7', '38.7', '5.309', '1.842', '0.844', '2.829', '8.474', '36.6', '1.7', '57', '36.7', '4', '800', '400', '1', '', '', '', '0', '']
};
const lower = `6.803 35.2 1.4 54 35.2 4 0
6.773 35.4 1.4 54 35.3 4 0
6.737 35.2 1.2 54 35.2 5 0
6.705 35.5 1.5 54 35.1 5 0
6.673 35.3 1.1 54 35 5 0
6.643 35.4 1.3 54 35 5 0
6.612 35.2 1.1 54 35.1 4 0
6.583 35.3 1.2 54 35.1 5 0
6.553 35.2 1.3 54 35.1 5 0
6.525 35.2 1.4 54 35.1 4 0
6.494 35 1.2 54 34.9 5 0
6.465 35.2 1.2 54 34.8 4 0
6.434 35.1 1.4 54 34.8 5 0
6.403 35 1.4 54 34.7 4 0
6.373 35 1.2 54 34.7 5 0
6.344 35 1.2 54 34.7 4 0
6.317 35.1 1.3 54 34.6 5 0
6.292 35 1 54 34.6 4 0
6.267 34.9 1 54 34.7 5 0
6.242 34.9 1 54 34.6 4 0
6.216 35.1 1.3 54 34.7 5 0
6.192 35 1 54 34.6 5 0
6.17 35.1 1.2 54 34.7 4 0
6.151 35.6 1.4 53 34.9 5 0
6.148 36.2 2.3 54 35.2 6 3
6.145 36 2.6 54 35.4 8 0`.split('\n');
lower.forEach((line, i) => {
  const v = line.split(' '), row = 35 + i;
  const tail = row === 59 ? ['1248', '404', '2778'] : row === 60 ? ['1245', '405', '2775'] : ['', '', ''];
  data[row] = ['', '', '', '', '', '', v[0], v[1], v[2], v[3], v[4], v[5], '800', '400', v[6], ...tail, '0', ''];
});
const tpl = `style="grid-template-columns:${cols}"`;
let html = `<div class="row heads" ${tpl}><span class="corner"></span>${letters.map(l => `<span>${l}</span>`).join('')}</div>`;
html += `<div class="row first" ${tpl}><span class="n">1</span>${titles.map(t => `<span class="h"><b>${t}</b><i></i></span>`).join('')}</div>`;
for (let r = 2; r <= 60; r++) {
  const cells = data[r] || Array(20).fill('');
  html += `<div class="row ${r % 2 ? 'odd' : 'even'}" ${tpl}><span class="n">${r}</span>${cells.map(c => `<span class="c">${c}</span>`).join('')}</div>`;
}
document.getElementById('sheet').innerHTML = html;

/* ---- line chart ---- */
const END = 3972, MID = 1543;
const right = pts => pts.map(([x, y]) => [x + MID, y]);
const X = x => 840 + x / 2.529, Y = y => 270 + y / 3;
let seed = 11;
const rnd = () => (seed = (seed * 16807) % 2147483647) / 2147483647;

const vram = [[112,513],[138,513],[144,516],[438,516],[450,513],[455,450],[460,420],[467,335],[473,315],[491,315],[496,300],[516,301],[524,318],[549,318],[555,312],[565,310],[576,321],[582,309],[599,309],[605,318],[676,318],[681,378],[693,378],[699,362],[704,378],[711,357],[1023,357],[1028,342],[1040,345],[1073,345],[1080,333],[1103,333],[1108,330],[1166,330],[1171,318],
  ...right([[62,318],[67,330],[183,330],[194,308],[206,310],[222,330],[731,330],[737,318],[1470,318],[1475,310],[1500,306],[1522,318]]), [END,318]];
const ded = [[112,837],[120,840],[450,840],[455,770],[473,637],[491,637],[496,624],[522,627],[530,638],[553,638],[563,632],[574,643],[580,630],[599,630],[605,639],[676,639],[681,702],[695,702],[700,687],[705,700],[711,682],[1012,682],[1028,667],[1073,667],[1080,654],[1166,654],[1171,639],
  ...right([[62,639],[67,651],[183,651],[194,630],[206,631],[222,651],[731,651],[737,639],[1470,639],[1475,630],[1500,625],[1515,636]]), [END,636]];
const core = [[112,720],[121,765],[127,747],[132,750],[139,693],[145,693],[150,768],[158,780],[166,783],[172,778],[180,720],[184,780],[190,722],[195,765],[203,778],[208,778],[213,793],[221,775],[227,765],[236,753],[242,810],[248,808],[253,757],[261,790],[272,778],[280,765],[288,722],[294,785],[302,745],[308,750],[313,768],[320,762],[332,760],[339,795],[346,760],[352,765],[358,760],[370,778],[374,720],[380,785],[391,763],[397,785],[414,776],[420,760],[426,778],[438,747],[450,617],[462,745],[470,660],[478,693],[518,693],[524,730],[531,780],[537,695],[549,723],[555,693],[565,693],[571,720],[576,572],[582,693],[594,693],[599,722],[605,663],[617,663],[623,690],[628,663],[640,690],[652,632],[659,690],[670,635],[676,690],[688,693],[697,603],[704,603],[711,660],[716,693],[722,710],[728,695],[745,723],[755,693],[761,663],[767,693],[778,690],[785,682],[791,693],[801,663],[808,690],[814,663],[820,693],[854,693],[860,663],[866,693],[876,693],[883,750],[889,733],[900,723],[905,705],[911,750],[919,723],[925,693],[935,693],[946,663],[952,693],[958,693],[968,730],[974,693],[998,693],[1003,750],[1010,693],[1021,693],[1026,632],[1040,632],[1045,668],[1063,645],[1068,665],[1079,632],[1085,720],[1096,632],[1103,690],[1115,665],[1126,632],[1131,690],[1149,632],[1166,723],[1177,663],[1183,690],[1194,632],[1205,660],[1216,632],[1224,655],[1229,648],[1235,675],[1240,663],[1265,668],[1275,663],[1281,680],[1295,663],[1310,668],[1320,663],[1355,663],[1362,700],[1377,700],[1383,663],[1395,690],[1412,690],[1430,663],[1442,690],[1450,650],[1461,690],[1490,675],[1502,650],[1512,720],[1520,690],[1527,720],[1535,660],[1543,663]];
const levels = (from, to, list) => {
  for (let x = from; x < to; x += 5.76) core.push([x, list[Math.floor(rnd() * list.length)]]);
};
levels(1549, 1720, [693,693,693,690,663,723,670]);
core.push([1726,603],[1731,640],[1737,680],[1743,640]);
levels(1749, 1965, [693,690,663,663,723,693,635]);
levels(1970, 2040, [693,693,663,720]);
core.push([2043,723],[2048,603],[2053,685]);
levels(2058, 2110, [663,633,633,663]);
core.push([2112,733]);
levels(2118, 2200, [663,633,690,693]);
levels(2200, 2280, [663,663,663,672,663]);
core.push([2284,690],[2288,663],[2293,690]);
levels(2298, 2342, [633,663,655]);
core.push([2349,572],[2355,633]);
levels(2361, 2425, [633,663,663,672,640]);
levels(2430, 2490, [663,663,663]);
levels(2490, 2660, [633,633,663,663,690,633]);
levels(2660, 2760, [663,663,640,663]);
levels(2760, 2920, [633,663,663,663,633,663,690]);
core.push([2926,603],[2932,663],[2966,640],[2971,603]);
levels(2977, 3800, [633,633,663,663,663,693,663,720]);
core.push([3806,700],[3817,700],[3823,695],[3830,690],[3836,750],[3845,663],[3850,663],[3855,572],[3861,663],[3868,640],[3873,750],[3880,693],[3888,693],[3897,632],[3902,663],[3911,663],[3915,735],[3922,670],[3930,663],[3952,663],[3958,633],[3963,663],[END,663]);
const dips = [];
[1779, 1967, 1980, 1990, 2003, 3131, 3235, 3321, 3448, 3511, 3547, 3579, 3665, 3701, 3895].forEach(x => dips.push([x - 6, 690], [x, 936], [x + 5, 690]));
const freq = [[112,936],[576,936],[582,690],[1010,690],[1015,936],[1025,936],[1032,690], ...dips, [END,690]];
const soc = [[450,1020],[462,1020],[467,915],[473,1020],[487,1020],[491,915],[496,1020],[501,915],[508,1020],[513,915],[519,1020],[530,915],[537,1020],[558,1020],[564,915],[571,1020],[578,912],[583,918],[590,936],[1003,936],[1010,912],[1015,1020],[1021,1020],[1028,915],[1031,936],[1073,936],[1079,1020],[1085,936],[1147,936],[1153,1020],[1159,936],
  ...right([[228,936],[236,1020],[241,936],[284,936],[290,915],[298,936],[418,936],[424,1020],[430,915],[440,936],[448,915],[455,936],[465,915],[493,915],[500,936],[505,915],[550,915],[556,936],[1480,936],[1486,915],[1492,936],[1508,936],[1515,915],[1526,915],[1532,936],[1544,936],[1550,1020],[1556,936]]),
  [3290,936],[3296,1020],[3302,936],[3505,936],[3511,1020],[3517,936],[3660,936],[3665,1020],[3671,936],[END,936]];
const limit = [[112,1020],[450,1020],[455,972],[462,980],[473,974],[490,970],[550,972],[574,968],[582,948],[599,945],[676,945],[681,954],[700,951],[870,951],[880,954],[1020,956],[1028,948],[1073,945],[1123,943],[1130,940],[1170,936],[1330,936],[1350,933],[1370,935],[1400,939],[1540,941],
  ...right([[180,944],[345,944],[425,938],[790,937],[955,937],[1240,941],[1480,940]]), [END,940]];
const fps = [[455,1106],[490,1090],[497,1063],[508,1062],[524,1070],[531,1095],[578,1095],[597,1090],[605,1056],[613,1080],[640,1077],[700,1077],[714,1106],[820,1106],[826,1080]];
for (let x = 832; x < 1005; x += 6) fps.push([x, 1080]);
fps.push([1014,1068],[1020,1082]);
for (let x = 1030; x < END; x += 6) fps.push([x, (x > 1968 && x < 2160) ? 1090 : (x < 1960 && rnd() < .18 ? 1074 : 1080 + (x > 2160 ? 3 : 0))]);
const disk = [[112,1092],[560,1092],[695,1092],[703,1077],[711,1092],[819,1092],[825,1052],[830,1052],[836,1092],[3905,1092],[3914,1060],[3921,1060],[3928,1092],[END,1092]];
const disp = [[112,1100],[140,1098],[145,1088],[168,1088],[173,1099],[450,1099],[465,1095],[555,1095],[563,1074],[577,1074],[584,1090],[1090,1090],[1096,1102],[1102,1086],[1192,1086],[1200,1074],[1208,1088],[END,1091]];
const flat = (y, from = 112) => [[from, y], [END, y]];
const frame = [[112,1099],[450,1103],[455,1048],[461,1103],[END,1103]];
const series = [
  ['#264478', flat(1094)], ['#255e91', flat(1098)], ['#5b9bd5', flat(1100)], ['#9e480e', flat(1107)],
  ['#d2a000', [[112,1106],[450,1106],[455,1112],[576,1109],[582,1112],[1968,1112],[1973,1108],[2100,1108],[2106,1112],[END,1112]]],
  ['#2f5aa8', disk], ['#9dc3e6', frame], ['#43682b', flat(1094, 450)], ['#d26012', fps], ['#878787', flat(1086)], ['#548a2f', disp],
  ['#5b9bd5', core], ['#6a8fd0', ded], ['#f1975a', freq], ['#b7b7b7', soc], ['#8cc168', limit], ['#2e75bd', vram]
];
const legend = [
  ['核心频率 (avg) [MHz]', '#5b9bd5'], ['CPU总利用率 [%]', '#ed7d31'], ['CPU SOC [℃]', '#a5a5a5'], ['CPU封装功率 [W]', '#ffc000'], ['CPU 核心功率 (SVI3 TFN) [W]', '#4472c4'], ['CPU SoC功率 (SVI3 TFN) [W]', '#70ad47'], ['Core+SoC+SR 功率 (SVI3 TFN) [W]', '#255e91'], ['APU STAPM [W]', '#9e480e'], ['Thermal Limit [%]', '#636363'],
  ['活动核心的平均数 []', '#997300'], ['磁盘温度 [℃]', '#264478'], ['GPU温度 [℃]', '#43682b'], ['GPU ASIC 功率 [W]', '#7cafdd'], ['GPU频率 [MHz]', '#f1975a'], ['GPU SoC 频率 [MHz]', '#b7b7b7'], ['GPU利用率 [%]', '#ffcd33'], ['GPU D3D专用显存 [MB]', '#698ed0'], ['GPU D3D动态 [MB]', '#8cc168'],
  ['显存使用 [MB]', '#327dc2'], ['帧率 [FPS]', '#d26012'], ['电池电量 [%]', '#848484'], ['充电速度 [W]', '#cc9a00'], ['帧率 (Presented) [FPS]', '#335aa1'], ['帧率 (Displayed) [FPS]', '#5a8a39'], ['帧时间 [ms]', '#9dc3e6']
];
const two = n => String(n).padStart(2, '0');
function plot(full) {
  let s = '<rect x="849" y="316" width="1574" height="420" fill="#fff"/>';
  for (let v = 4000, y = 354.5; v >= -500; v -= 500, y += 35.560) {
    s += `<path class="grid" d="M884 ${y.toFixed(1)}H2411"/><text class="txt" x="877.500" y="${(y + 2.6).toFixed(1)}" text-anchor="end" font-size="8">${v}</text>`;
  }
  for (let i = 0; i <= 133; i++) {
    const t = 37 * 60 + 43 + i * 10, x = 886.3 + i * 11.41;
    s += `<text class="txt" font-size="7.300" textLength="29" transform="translate(${(x + 2.6).toFixed(1)} 673) rotate(-90)">23:${two(Math.floor(t / 60))}:${two(t % 60)}</text>`;
  }
  series.forEach(([c, pts]) => {
    s += `<polyline class="s" stroke="${c}" points="${pts.map(([x, y]) => X(x).toFixed(1) + ',' + Y(y).toFixed(1)).join(' ')}"/>`;
  });
  legend.forEach(([name, c], i) => {
    const x = 1027 + (i % 9) * 136, y = 691.7 + Math.floor(i / 9) * 15.4;
    const size = name.length > 24 ? 7.7 : 8.1;
    s += `<path d="M${x} ${y}h20" stroke="${c}" stroke-width="2"/><text class="txt" x="${x + 21}" y="${(y + 2.6).toFixed(1)}" font-size="${size}">${name}</text>`;
  });
  s += '<text class="txt" x="1638" y="337.500" text-anchor="middle" font-size="12.800">图表标题</text>';
  if (!full) return `<svg viewBox="849 316 1574 420">${s}<path d="M849 317H2423" stroke="#ccc" stroke-width="4"/></svg>`;
  const dots = [[854,319],[1638,319],[2422,319],[854,527],[2422,527],[854,735],[1638,735],[2422,735]]
    .map(([x, y]) => `<circle cx="${x}" cy="${y}" r="5.700" fill="#fff" stroke="#595959" stroke-width="2"/>`).join('');
  return `<svg viewBox="840 306 1594 440">${s}${dots}<rect x="851.5" y="318.5" width="1569" height="415" fill="none" stroke="#3f48cc" stroke-width="5"/></svg>`;
}
document.getElementById('chart').innerHTML = plot(true);
document.getElementById('preview').innerHTML = plot(false);
document.getElementById('thumb-line').innerHTML = plot(false);

/* ---- stacked area thumbnail ---- */
const bands = [['#2e75bd', 22, 10], ['#8cc168', 29, 20.5], ['#698ed0', 30.5, 22.2], ['#b7b7b7', 34, 28], ['#f1975a', 34.6, 30.5], ['#5b9bd5', 37, 36.3]];
let area = '<rect x=".5" y=".5" width="199" height="52" fill="#fff" stroke="#ccc"/>';
for (let y = 5; y < 42; y += 5.3) area += `<path d="M4 ${y}h195" stroke="#ddd"/>`;
bands.forEach(([c, low, high]) => {
  let p = `M5 41V${low}H20L23 ${(low + high) / 2}H27L28 ${high}`;
  for (let x = 29; x < 199; x++) {
    const notch = (x > 48 && x < 51) || (x > 154 && rnd() < .3) ? 2 : 0;
    p += `L${x} ${(high + notch * (high < 36 ? 1 : 0) + (rnd() < .15 ? .8 : 0)).toFixed(1)}`;
  }
  area += `<path d="${p}V41z" fill="${c}"/>`;
});
for (let x = 5; x < 199; x += 2.4) area += `<path d="M${x.toFixed(1)} 42v4" stroke="#999"/>`;
for (let i = 0; i < 9; i++) area += `<path d="M${30 + i * 16} 47.500h10M${30 + i * 16} 49.500h9M${30 + i * 16} 51.300h7" stroke="#aaa" stroke-width=".7"/>`;
area += '<text class="txt" x="100" y="4" font-size="3" text-anchor="middle">图表标题</text>';
document.getElementById('area').innerHTML = area;

/* ---- histogram thumbnails ---- */
const bars = (id, list) => {
  document.getElementById(id).innerHTML = list.map(h => `<i style="height:${h}px"></i>`).join('');
};
bars('hist-a', [12.5, 1, 1, 1, 1.500, 14.5, 29.5, 33.5, 37.5, 27.5, 8.5, 2.5, 1, 1]);
bars('hist-b', [1, 1, 2.5, 2.5, 1, 4.5, 1, 28.5, 1, 35.5, 1, 12.5, 1, 1, 0, 1]);
```
